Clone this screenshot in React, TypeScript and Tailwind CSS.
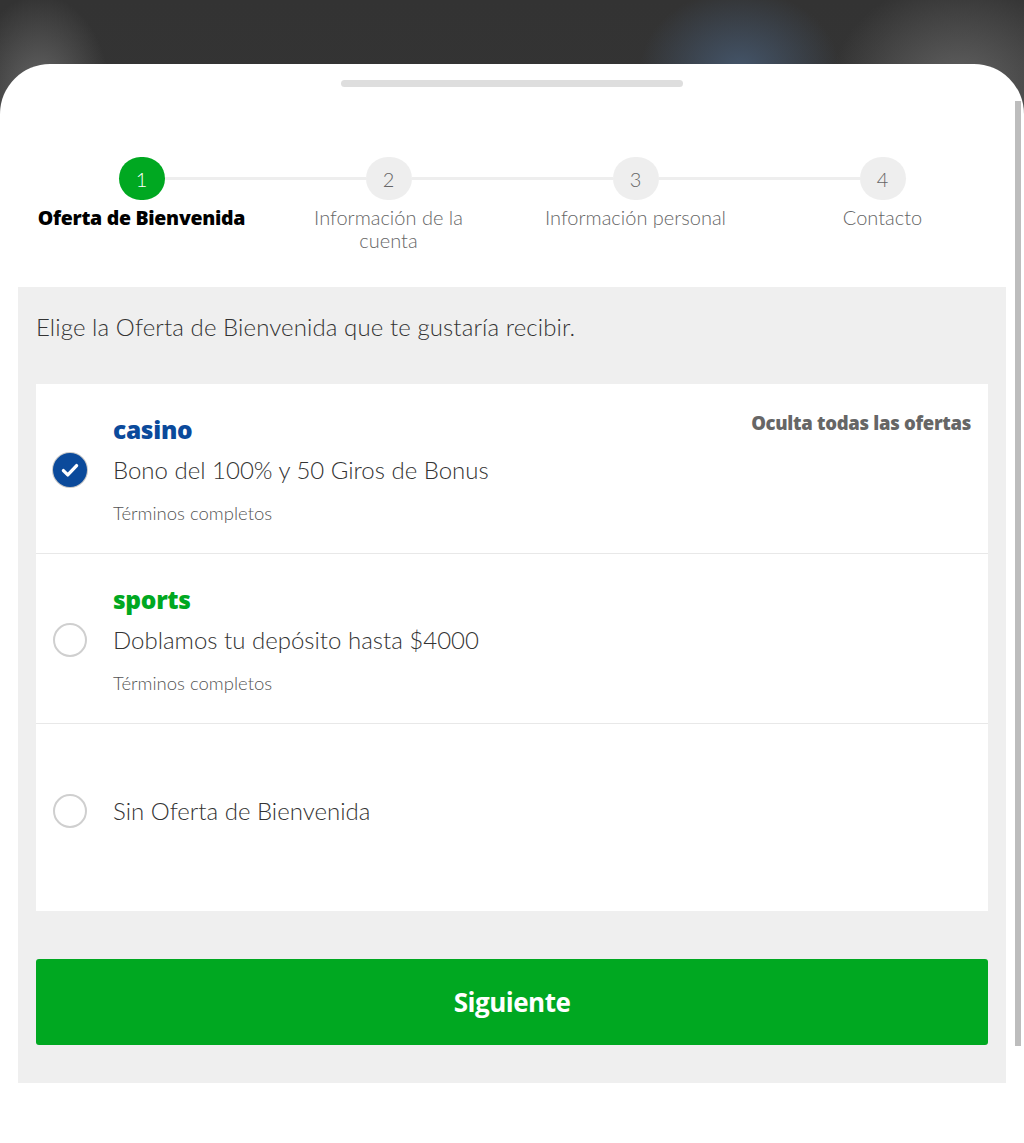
import React from "react"

const steps = [
  { n: 1, label: "Oferta de Bienvenida" },
  { n: 2, label: "Información de la\ncuenta" },
  { n: 3, label: "Información personal" },
  { n: 4, label: "Contacto" },
]

function Radio({ checked }: { checked: boolean }) {
  if (checked) {
    return (
      <span className="flex h-[34px] w-[34px] shrink-0 items-center justify-center rounded-full bg-[#0b4a9b] shadow-[0_0_0_1px_#c8c8c8]">
        <svg width="22" height="22" viewBox="0 0 20 20" fill="none">
          <path d="M4 10.5l4 4 8-8.5" stroke="white" strokeWidth="3" strokeLinecap="round" strokeLinejoin="round" />
        </svg>
      </span>
    )
  }
  return <span className="block h-[34px] w-[34px] shrink-0 rounded-full border-2 border-[#cfcfcf] bg-white" />
}

function Offer({
  title,
  titleColor,
  text,
  checked,
  showHide,
  first,
}: {
  title: string
  titleColor: string
  text: string
  checked: boolean
  showHide?: boolean
  first?: boolean
}) {
  return (
    <div className={`grid grid-cols-[77px_1fr] pt-[31px] pb-[29px] pr-[17px] ${first ? "" : "border-t border-[#e8e8e8]"}`}>
      <div />
      <div className="flex items-start justify-between">
        <span className={`font-['Open_Sans'] text-[24.5px] leading-[30px] font-extrabold tracking-[-0.3px] ${titleColor}`}>{title}</span>
        {showHide && (
          <span className="mt-[-3px] font-['Open_Sans'] text-[18.5px] leading-[22px] font-extrabold tracking-[-0.3px] text-[#666]">
            Oculta todas las ofertas
          </span>
        )}
      </div>
      <div className="mt-[10px] flex h-[30px] items-center pl-[17px]">
        <Radio checked={checked} />
      </div>
      <div className="mt-[10px] font-['Lato'] text-[24px] leading-[30px] font-light text-[#333]">{text}</div>
      <div />
      <div className="mt-[17px] font-['Lato'] text-[18.5px] leading-[22px] font-light text-[#555]">Términos completos</div>
    </div>
  )
}

export default function App() {
  return (
    <div className="relative min-h-[1143px] w-full overflow-hidden bg-[#363636] bg-[radial-gradient(ellipse_70px_100px_at_40px_95px,#666,transparent),radial-gradient(ellipse_130px_110px_at_960px_90px,#636363,transparent),radial-gradient(ellipse_100px_80px_at_740px_70px,#44556a,transparent),linear-gradient(#333,#383838_45%,#4e4e4e)]">
      <div className="relative mt-[64px] h-[1079px] rounded-t-[50px] bg-white">
        <div className="pt-[16px]">
          <div className="mx-auto h-[7px] w-[342px] rounded-full bg-[#dedede]" />
        </div>

        <div className="mt-[70px] grid grid-cols-4 px-[18px]">
          {steps.map((s, i) => {
            const active = i === 0
            return (
              <div key={s.n} className="flex flex-col items-center">
                <div className="flex w-full items-center">
                  <div className={`h-[3px] flex-1 ${i === 0 ? "" : "bg-[#eeeeee]"}`} />
                  <div
                    className={`flex h-[43px] w-[46px] items-center justify-center rounded-full font-['Lato'] text-[20px] font-light ${
                      active ? "bg-[#00a821] text-white" : "bg-[#eeeeee] text-[#666]"
                    }`}
                  >
                    {s.n}
                  </div>
                  <div className={`h-[3px] flex-1 ${i === 3 ? "" : "bg-[#eeeeee]"}`} />
                </div>
                <div
                  className={`mt-[6px] h-[47px] whitespace-pre-line text-center leading-[23px] ${
                    active
                      ? "font-['Open_Sans'] text-[19.5px] font-extrabold tracking-[-0.3px] text-black"
                      : "font-['Lato'] text-[20px] font-light text-[#666]"
                  }`}
                >
                  {s.label}
                </div>
              </div>
            )
          })}
        </div>

        <div className="mx-[18px] mt-[34px] bg-[#efefef] px-[18px] pt-[25px] pb-[38px]">
          <p className="font-['Lato'] text-[24px] leading-[30px] font-light tracking-[0.1px] text-[#333]">
            Elige la Oferta de Bienvenida que te gustaría recibir.
          </p>
          <div className="mt-[42px] bg-white">
            <Offer first title="casino" titleColor="text-[#0b4a9b]" text="Bono del 100% y 50 Giros de Bonus" checked showHide />
            <Offer title="sports" titleColor="text-[#00a821]" text="Doblamos tu depósito hasta $4000" checked={false} />
            <div className="grid h-[188px] grid-cols-[77px_1fr] items-center border-t border-[#e8e8e8] pb-[14px]">
              <div className="flex h-[30px] items-center pl-[17px]">
                <Radio checked={false} />
              </div>
              <div className="font-['Lato'] text-[24px] leading-[30px] font-light text-[#333]">Sin Oferta de Bienvenida</div>
            </div>
          </div>
          <button
            type="button"
            className="mt-[48px] flex h-[86px] w-full items-center justify-center rounded-[3px] bg-[#00a821] font-['Open_Sans'] text-[26px] font-bold tracking-[-0.5px] text-white"
          >
            Siguiente
          </button>
        </div>

        <div className="absolute top-[37px] right-[3px] h-[945px] w-[6px] bg-[#bdbdbd]" />
      </div>
    </div>
  )
}
